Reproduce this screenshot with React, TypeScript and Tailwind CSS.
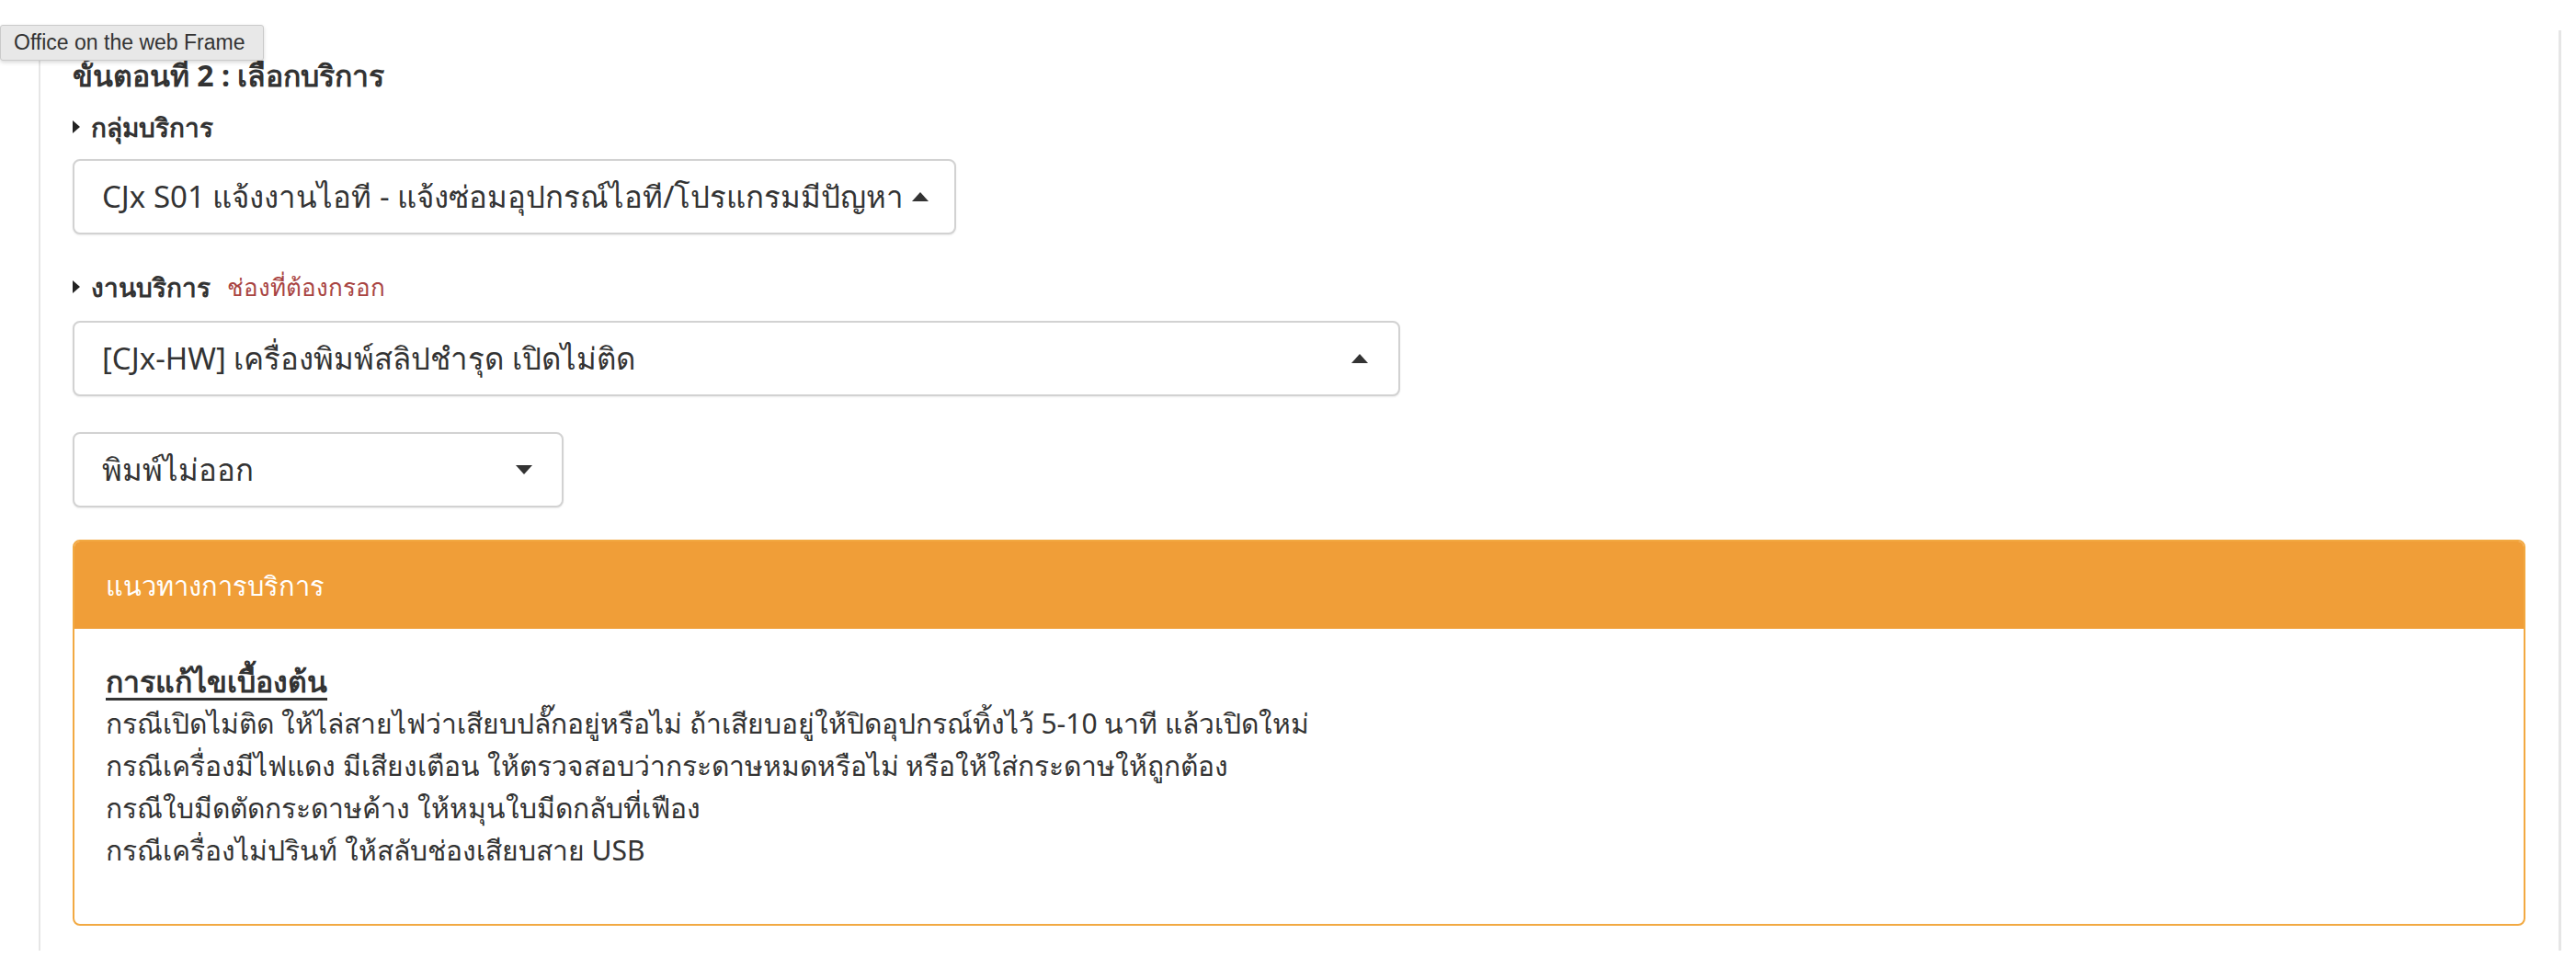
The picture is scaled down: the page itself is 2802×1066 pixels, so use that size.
import React from 'react';

const caret = (dir: 'up' | 'down') => (
  <svg width="18" height="10" viewBox="0 0 18 10" className="shrink-0">
    {dir === 'up' ? <path d="M9 0 L18 10 L0 10 Z" fill="#333" /> : <path d="M0 0 L18 0 L9 10 Z" fill="#333" />}
  </svg>
);

function Bullet() {
  return (
    <svg width="8" height="14" viewBox="0 0 8 14" className="mr-[12px] shrink-0">
      <path d="M0 0 L8 7 L0 14 Z" fill="#222" />
    </svg>
  );
}

function SelectBox({ text, width, dir, pr }: { text: string; width: string; dir: 'up' | 'down'; pr: string }) {
  return (
    <div
      className={`${width} ${pr} h-[82px] flex items-center justify-between pl-[30px] rounded-[8px] border-2 border-[#d2d2d2] bg-white shadow-[0_1px_2px_rgba(0,0,0,0.08)]`}
    >
      <span className="text-[33px] text-[#333] whitespace-nowrap">{text}</span>
      {caret(dir)}
    </div>
  );
}

export default function App() {
  const tips = [
    'กรณีเปิดไม่ติด ให้ไล่สายไฟว่าเสียบปลั๊กอยู่หรือไม่ ถ้าเสียบอยู่ให้ปิดอุปกรณ์ทิ้งไว้ 5-10 นาที แล้วเปิดใหม่',
    'กรณีเครื่องมีไฟแดง มีเสียงเตือน ให้ตรวจสอบว่ากระดาษหมดหรือไม่ หรือให้ใส่กระดาษให้ถูกต้อง',
    'กรณีใบมีดตัดกระดาษค้าง ให้หมุนใบมีดกลับที่เฟือง',
    'กรณีเครื่องไม่ปรินท์ ให้สลับช่องเสียบสาย USB',
  ];

  return (
    <div className="relative w-[2802px] h-[1066px] bg-white overflow-hidden font-['Noto_Sans','DejaVu_Sans',sans-serif] text-[#333]">
      {/* tooltip */}
      <div className="absolute left-0 top-[27px] w-[287px] h-[39px] flex items-center pl-[14px] bg-[#e8e8e8] border border-[#cacaca] rounded-[3px] shadow-[0_2px_4px_rgba(0,0,0,0.15)] text-[23px] text-[#333] font-['Liberation_Sans',sans-serif] z-10">
        Office on the web Frame
      </div>

      <div className="mt-[33px] ml-[42px] w-[2744px] h-[1001px] border-l-2 border-r-[3px] border-[#e6e6e6] pl-[35px] pr-[36px] pt-[27px] flex flex-col items-start">
        <h4 className="text-[32px] font-bold leading-[44px] text-[#333]">ขั้นตอนที่ 2 : เลือกบริการ</h4>

        <div className="mt-[14px] h-[40px] flex items-center text-[28px] font-bold">
          <Bullet />
          กลุ่มบริการ
        </div>

        <div className="mt-[15px]">
          <SelectBox text="CJx S01 แจ้งงานไอที - แจ้งซ่อมอุปกรณ์ไอที/โปรแกรมมีปัญหา" width="w-[961px]" dir="up" pr="pr-[28px]" />
        </div>

        <div className="mt-[37px] h-[40px] flex items-center text-[28px] font-bold">
          <Bullet />
          งานบริการ
          <span className="ml-[18px] text-[26px] font-normal text-[#a94442]">ช่องที่ต้องกรอก</span>
        </div>

        <div className="mt-[17px]">
          <SelectBox text="[CJx-HW] เครื่องพิมพ์สลิปชำรุด เปิดไม่ติด" width="w-[1444px]" dir="up" pr="pr-[33px]" />
        </div>

        <div className="mt-[39px]">
          <SelectBox text="พิมพ์ไม่ออก" width="w-[534px]" dir="down" pr="pr-[32px]" />
        </div>

        <div className="mt-[35px] w-full h-[420px] rounded-[8px] border-2 border-[#f2a942] overflow-hidden flex flex-col">
          <div className="h-[95px] shrink-0 bg-[#f09e38] flex items-center pl-[34px] text-[29px] text-white">
            แนวทางการบริการ
          </div>
          <div className="pl-[34px] pt-[34px] text-[30px] leading-[46px]">
            <div className="text-[32px] font-bold underline underline-offset-[6px]">การแก้ไขเบื้องต้น</div>
            {tips.map((t, i) => (
              <div key={i}>{t}</div>
            ))}
          </div>
        </div>
      </div>
    </div>
  );
}
